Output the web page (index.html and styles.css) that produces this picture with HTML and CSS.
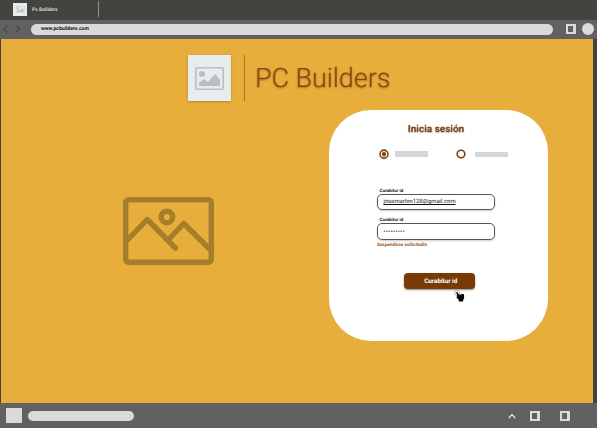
FILE: index.html
```html
<!DOCTYPE html>
<html lang="es">
<head>
<meta charset="utf-8">
<title>Pc Builders</title>
<link rel="stylesheet" href="styles.css">
</head>
<body>
<div class="browser">
  <header class="tabs">
    <div class="tab">
      <span class="favicon"><svg viewBox="0 0 29 23"><rect x=".8" y=".8" width="27.4" height="21.4" rx="1.5" fill="none" stroke="currentColor" stroke-width="1.6"/><circle cx="7" cy="7" r="3" fill="currentColor"/><path d="M4 19v-3l5-4 4 3 7-8 5 6v6z" fill="currentColor"/></svg></span>
      <span class="tab-title">Pc Builders</span>
    </div>
  </header>
  <nav class="toolbar">
    <svg class="arrows" viewBox="0 0 18 10"><path d="M4.5 1.2.9 5l3.6 3.8M12.8 1.2 16.4 5l-3.6 3.8" fill="none" stroke="currentColor" stroke-width="1.4"/></svg>
    <div class="address">www.pcbuilders.com</div>
    <svg class="panel-icon" viewBox="0 0 10 10"><path d="M0 0h10v10H0zM2 2v6h5V2z" fill="currentColor" fill-rule="evenodd"/></svg>
    <span class="avatar"></span>
  </nav>
  <main class="page">
    <div class="brand">
      <span class="logo"><svg viewBox="0 0 29 23"><rect x=".8" y=".8" width="27.4" height="21.4" rx="1.5" fill="none" stroke="currentColor" stroke-width="1.6"/><circle cx="7" cy="7" r="3" fill="currentColor"/><path d="M4 19v-3l5-4 4 3 7-8 5 6v6z" fill="currentColor"/></svg></span>
      <span class="rule"></span>
      <h1>PC Builders</h1>
    </div>
    <div class="content">
      <svg class="hero" viewBox="0 0 91 68"><g fill="none" stroke="currentColor" stroke-width="5.4"><rect x="2.7" y="2.7" width="85.6" height="62.6" rx="3"/><circle cx="43.9" cy="20" r="5.8"/><path d="M3.5 44 24.2 22.5 52.5 51M45.5 42.5 60.8 26.5 88 53.5" stroke-linecap="round" stroke-linejoin="round"/></g></svg>
      <form class="card">
        <h2>Inicia sesión</h2>
        <div class="choices">
          <svg class="radio selected" viewBox="0 0 10 10"><circle cx="5" cy="5" r="4" fill="none" stroke="currentColor" stroke-width="1.4"/><circle cx="5" cy="5" r="2.1" fill="currentColor"/></svg><span class="stub"></span>
          <svg class="radio second" viewBox="0 0 10 10"><circle cx="5" cy="5" r="3.8" fill="none" stroke="currentColor" stroke-width="1.6"/></svg><span class="stub low"></span>
        </div>
        <div class="field"><label>Curabitur id</label><div class="input"><span class="email">josemarlon128@gmail.com</span></div></div>
        <div class="field"><label>Curabitur id</label><div class="input"><span class="password">•••••••••</span></div></div>
        <p class="hint">Suspendisse sollicitudin</p>
        <div class="button">Curabitur id
          <svg class="pointer" viewBox="0 0 11 13"><circle cx="3.2" cy="3" r="2.6" fill="none" stroke="#999" stroke-width=".7"/><path d="M2.2 2.5c.6-.7 1.3-.4 1.7.3l1.4 2.4.7-.7 1 .1.6-.6 1 .3.5-.4c.8 0 1 .6 1 1.3v3.4l-1 1.3v1.7H4.8V10L2.6 7.6l-.1-1 1-.2z" fill="#000"/></svg>
        </div>
      </form>
    </div>
  </main>
  <footer class="taskbar">
    <span class="start"></span>
    <span class="search"></span>
    <svg class="chevron" viewBox="0 0 8 6"><path d="M.8 5 4 1.5 7.2 5" fill="none" stroke="currentColor" stroke-width="1.5"/></svg>
    <svg class="panel-icon" viewBox="0 0 10 10"><path d="M0 0h10v10H0zM2 2v6h5V2z" fill="currentColor" fill-rule="evenodd"/></svg>
    <svg class="panel-icon" viewBox="0 0 10 10"><path d="M0 0h10v10H0zM2 2v6h5V2z" fill="currentColor" fill-rule="evenodd"/></svg>
  </footer>
</div>
</body>
</html>
```
FILE: styles.css
```css
* { box-sizing: border-box; }
body { margin: 0; font-family: Roboto, "Liberation Sans", sans-serif; text-rendering: geometricPrecision; }
svg { display: block; flex: none; }
.browser {
  width: 597px;
  height: 428px;
  display: grid;
  grid-template-rows: 20px 18.5px 364.5px 25px;
  overflow: hidden;
  background: #434340;
}
.tab {
  display: flex;
  align-items: center;
  width: 99px;
  height: 16px;
  padding-left: 13px;
  border-right: 1px solid #92928e;
}
.favicon, .logo {
  display: flex;
  align-items: center;
  justify-content: center;
  background: #e7ecee;
  color: #b9bec1;
}
.favicon { width: 14px; height: 13px; }
.favicon svg { width: 9px; height: 7px; }
.tab-title { margin-left: 5px; padding-top: 1px; color: #d4d4d4; font-size: 5px; font-weight: 700; }
.tabs { padding-top: 1px; }
.toolbar, .taskbar { display: flex; align-items: center; background: #616161; color: #dadada; }
.toolbar { padding-left: 3px; }
.arrows { width: 18px; height: 10px; color: #4b4b4b; }
.address {
  width: 522px;
  height: 11px;
  margin: 0 13px 0 10px;
  padding-left: 10px;
  border-radius: 6px;
  background: #dadada;
  color: #111;
  font-size: 5.1px;
  font-weight: 700;
  line-height: 11px;
}
.panel-icon { width: 10px; height: 10px; }
.avatar { width: 12px; height: 12px; margin-left: 6px; border-radius: 50%; background: #dadada; }
.page { margin: 0 4px 0 1px; padding-top: 16.5px; background: #e8ae3b; }
.brand { display: flex; height: 46px; margin-left: 186.6px; }
.logo { width: 43px; height: 46px; box-shadow: 0 1px 2px #805b1d80; }
.logo svg { width: 29px; height: 23px; }
.rule { width: 1px; margin-left: 13.5px; background: #a9742a; }
h1 {
  margin: 0 0 0 9.8px;
  color: #86490d;
  font-size: 26.9px;
  font-weight: 300;
  line-height: 46px;
  text-shadow: 0 1px 2px #693b1d80;
}
.content { display: flex; justify-content: space-between; margin: 9px 45.5px 0 122px; }
.hero { width: 91px; height: 68px; margin-top: 87px; color: #a67d2a; }
.card {
  width: 219px;
  height: 231px;
  padding: 12px 0 0 48px;
  border-radius: 42px;
  background: #fff;
}
h2 {
  width: 119px;
  margin: 0;
  color: #7b3d09;
  font-size: 10px;
  font-weight: 700;
  line-height: 15px;
  text-align: center;
  text-shadow: 0 1px 1px #0004;
}
.choices { display: flex; align-items: center; height: 10px; margin: 12px 0 27.5px 2px; }
.radio { width: 10px; height: 10px; color: #7b3d09; }
.selected { filter: drop-shadow(0 1px .5px #0004); }
.second { margin-left: 28.2px; }
.stub { width: 33px; height: 5.5px; margin-left: 6px; background: #d6d6d6; }
.low { margin: 1px 0 0 9.3px; }
.field { width: 118px; margin-bottom: 6px; }
label { display: block; height: 7px; padding-left: 3px; color: #111; font-size: 4.5px; font-weight: 700; line-height: 9px; }
.input {
  display: flex;
  align-items: center;
  height: 16.5px;
  padding-left: 6px;
  border: 1px solid #555;
  border-radius: 5px;
  box-shadow: 0 1px 2px #0003;
  color: #111;
}
.email { padding-top: 1px; font-size: 5.88px; line-height: 8px; text-decoration: underline; }
.password { padding-top: 1px; font-size: 5px; font-weight: 700; letter-spacing: .6px; }
.hint { margin: -4px 0 0 .4px; color: #955425; font-size: 4.6px; font-weight: 700; line-height: 8px; }
.button {
  position: relative;
  width: 71.5px;
  height: 16px;
  margin: 23.5px 0 0 27px;
  padding-left: 3px;
  border-radius: 4px;
  background: #783b06;
  box-shadow: 0 1px 2px #0007;
  color: #fff;
  font-size: 6.3px;
  font-weight: 700;
  line-height: 16px;
  text-align: center;
}
.pointer { position: absolute; top: 16.5px; left: 50px; width: 11px; height: 13px; }
.taskbar { padding-left: 6px; }
.start { width: 16px; height: 15px; background: #dadada; }
.search { width: 106px; height: 10px; margin-left: 5.5px; border-radius: 5px; background: #dadada; }
.chevron { width: 8px; height: 6px; margin-left: 374.2px; }
.taskbar .panel-icon { margin-left: 14.3px; }
.taskbar .panel-icon + .panel-icon { margin-left: 20px; }
```
